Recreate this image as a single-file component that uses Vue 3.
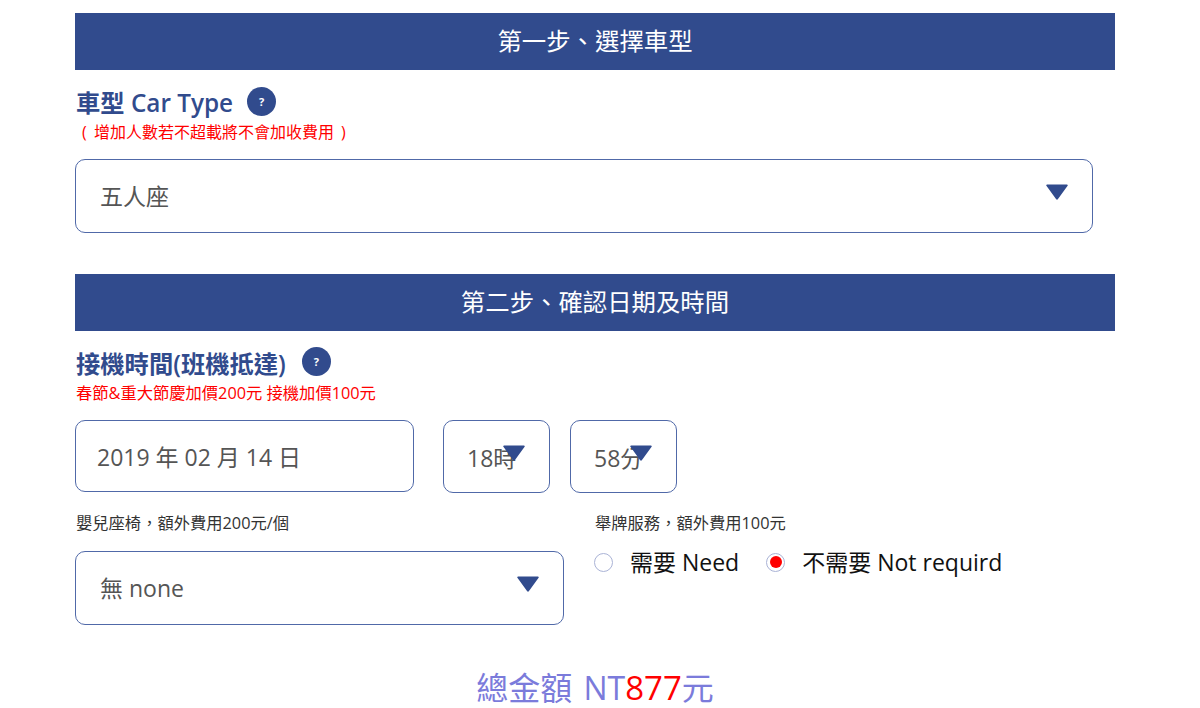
<script setup>
const brand = '#314b8d'
</script>

<template>
  <div class="page">
    <div class="bar">第一步、選擇車型</div>
    <div class="title-row">
      <span class="title">車型 Car Type</span>
      <span class="help help-a">?</span>
    </div>
    <div class="note note-a">( 增加人數若不超載將不會加收費用 )</div>
    <div class="box wide">
      <span class="value">五人座</span>
      <svg class="tri tri-wide" viewBox="0 0 22 16"><path :fill="brand" d="M1 0.5h20a.8.8 0 0 1 .6 1.3L12 15a1.2 1.2 0 0 1-2 0L.4 1.8A.8.8 0 0 1 1 .5z"/></svg>
    </div>

    <div class="bar second">第二步、確認日期及時間</div>
    <div class="title-row">
      <span class="title">接機時間(班機抵達)</span>
      <span class="help help-b">?</span>
    </div>
    <div class="note note-b">春節&amp;重大節慶加價200元 接機加價100元</div>
    <div class="date-row">
      <div class="box date"><span class="value date-value">2019 年 02 月 14 日</span></div>
      <div class="box time hour">
        <span class="value">18時</span>
        <svg class="tri tri-time" viewBox="0 0 22 16"><path :fill="brand" d="M1 0.5h20a.8.8 0 0 1 .6 1.3L12 15a1.2 1.2 0 0 1-2 0L.4 1.8A.8.8 0 0 1 1 .5z"/></svg>
      </div>
      <div class="box time">
        <span class="value">58分</span>
        <svg class="tri tri-time" viewBox="0 0 22 16"><path :fill="brand" d="M1 0.5h20a.8.8 0 0 1 .6 1.3L12 15a1.2 1.2 0 0 1-2 0L.4 1.8A.8.8 0 0 1 1 .5z"/></svg>
      </div>
    </div>
    <div class="extras">
      <div class="col-left">
        <div class="small-label">嬰兒座椅，額外費用200元/個</div>
        <div class="box seat">
          <span class="value">無 none</span>
          <svg class="tri tri-wide" viewBox="0 0 22 16"><path :fill="brand" d="M1 0.5h20a.8.8 0 0 1 .6 1.3L12 15a1.2 1.2 0 0 1-2 0L.4 1.8A.8.8 0 0 1 1 .5z"/></svg>
        </div>
      </div>
      <div class="col-right">
        <div class="small-label">舉牌服務，額外費用100元</div>
        <div class="radios">
          <span class="radio"></span>
          <span class="radio-label need">需要 Need</span>
          <span class="radio on"><i></i></span>
          <span class="radio-label">不需要 Not requird</span>
        </div>
      </div>
    </div>
    <div class="total">總金額 NT<b>877</b>元</div>
  </div>
</template>

<style>
html, body { margin: 0; background: #fff; overflow: hidden; }
</style>

<style scoped>
.page {
  width: 1040px;
  height: 708px;
  margin-left: 75px;
  padding-top: 13px;
  box-sizing: border-box;
  overflow: hidden;
  font-family: "Open Sans", "Noto Sans CJK TC", sans-serif;
}
.bar {
  height: 57px;
  line-height: 55px;
  background: #314b8d;
  color: #fff;
  text-align: center;
  font-size: 24.4px;
  font-weight: 400;
}
.second { margin-top: 41px; }
.title-row { display: flex; align-items: flex-start; margin-left: 1px; margin-top: 16px; height: 34px; }
.title { color: #314b8d; font-size: 24.3px; font-weight: 600; line-height: 34px; }
.help {
  width: 29px;
  height: 29px;
  border-radius: 50%;
  background: #314b8d;
  color: #fff;
  font-size: 11px;
  font-weight: 700;
  line-height: 29px;
  text-align: center;
  margin-left: 14px;
}
.help-a { margin-top: 1px; }
.help-b { margin-left: 16px; }
.note { color: #ff0000; font-size: 16px; line-height: 20px; margin-top: 2px; height: 37px; }
.note-a { margin-left: 7px; word-spacing: 3px; }
.note-b { margin-left: 1px; font-size: 16.3px; }
.box {
  position: relative;
  box-sizing: border-box;
  border: 1px solid #5069a8;
  border-radius: 10px;
  display: flex;
  align-items: center;
  background: #fff;
}
.wide { width: 1018px; height: 74px; padding-left: 24px; padding-bottom: 2px; }
.value { color: #555; font-size: 23px; }
.tri { position: absolute; width: 22px; height: 16px; }
.tri-wide { right: 24px; top: 24px; }
.tri-time { left: 59px; top: 24px; }
.date-row { display: flex; align-items: flex-start; }
.date { width: 339px; height: 72px; padding-left: 21px; }
.time { width: 107px; height: 73px; padding-left: 23px; margin-left: 20px; }
.hour { margin-left: 29px; }
.extras { display: flex; margin-top: 19px; }
.col-left { width: 489px; }
.col-right { margin-left: 30px; }
.small-label { color: #333; font-size: 16.3px; line-height: 22px; height: 39px; margin-left: 1px; }
.seat { width: 489px; height: 74px; padding-left: 24px; padding-bottom: 2px; }
.radios { display: flex; align-items: center; height: 26px; margin-top: -3px; }
.radio {
  width: 19px;
  height: 19px;
  box-sizing: border-box;
  border: 1px solid #aab3d6;
  border-radius: 50%;
  display: flex;
  align-items: center;
  justify-content: center;
  margin-top: 2px;
}
.radio i { width: 12px; height: 12px; border-radius: 50%; background: #ff0000; }
.radio-label { color: #111; font-size: 23px; margin-left: 17px; }
.need { margin-right: 27px; }
.total {
  margin-top: 45px;
  text-align: center;
  color: #7b7bdb;
  font-size: 32px;
  line-height: 36px;
  word-spacing: 3px;
}
.total b { color: #ff0000; font-weight: 400; font-size: 33px; line-height: 36px; }
</style>
